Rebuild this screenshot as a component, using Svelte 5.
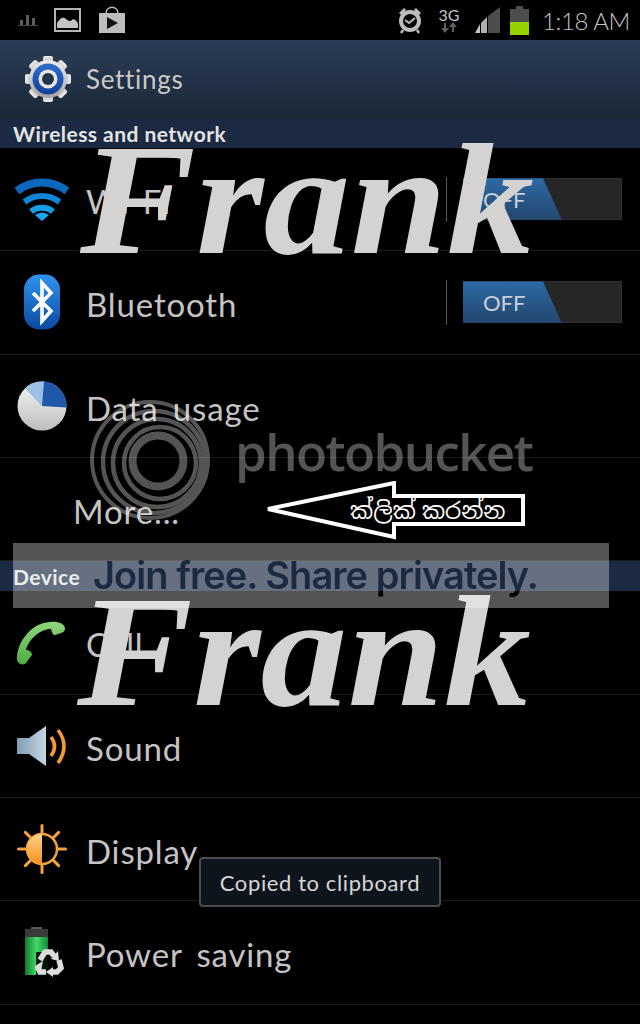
<script>
	const wireless = [
		{ id: 'wifi', label: 'Wi-Fi', toggle: true },
		{ id: 'bluetooth', label: 'Bluetooth', toggle: true },
		{ id: 'data', label: 'Data usage' },
		{ id: null, label: 'More...' }
	];
	const device = [
		{ id: 'call', label: 'Call' },
		{ id: 'sound', label: 'Sound' },
		{ id: 'display', label: 'Display' },
		{ id: 'power', label: 'Power saving' }
	];
	const teeth = [0, 45, 90, 135, 180, 225, 270, 315];
	const rays = [0, 45, 90, 135, 180, 225, 270, 315];
	const rings = [
		{ cx: 150, cy: 460, r: 58, w: 4 },
		{ cx: 154, cy: 462, r: 51, w: 4.5 },
		{ cx: 157, cy: 463, r: 44, w: 4.5 },
		{ cx: 160, cy: 463, r: 36, w: 4.5 },
		{ cx: 158, cy: 461, r: 25.5, w: 8 }
	];
</script>

{#snippet icon(id)}
	<svg class="icon" viewBox="0 0 56 56" width="56" height="56" aria-hidden="true">
		{#if id === 'wifi'}
			<g fill="none">
				<path d="M3 20A41 41 0 0 1 53 20" stroke-width="8" stroke="#0c68bd" />
				<path d="M10.5 31A29 29 0 0 1 45.5 31" stroke-width="6" stroke="#1184d6" />
				<path d="M17 40.5A18 18 0 0 1 39 40.5" stroke-width="6" stroke="#179ce6" />
			</g>
			<path d="M28 50L21 44Q28 39 35 44Z" fill="#1aa6ee" />
		{:else if id === 'bluetooth'}
			<defs>
				<linearGradient id="bt-g" x1="0" y1="0" x2="0" y2="1">
					<stop offset="0" stop-color="#2f93ee" />
					<stop offset="1" stop-color="#0a4aa0" />
				</linearGradient>
			</defs>
			<rect x="10" y="0.5" width="36" height="55" rx="15" fill="url(#bt-g)" />
			<path
				d="M19 19L37 37L28 47V9L37 19L19 37"
				fill="none"
				stroke="#fff"
				stroke-width="3.6"
				stroke-linejoin="miter"
			/>
		{:else if id === 'data'}
			<defs>
				<linearGradient id="pie-g" x1="0" y1="0" x2="0" y2="1">
					<stop offset="0" stop-color="#f6f6f6" />
					<stop offset="1" stop-color="#bdbdbd" />
				</linearGradient>
			</defs>
			<circle cx="28" cy="28" r="24.5" fill="url(#pie-g)" />
			<path d="M28 28L23 3.8A24.5 24.5 0 0 1 52.5 29.5Z" fill="#1f58a8" />
			<path d="M28 28L11 10.5A24.5 24.5 0 0 1 30 3.6Z" fill="#9cc0e6" />
		{:else if id === 'call'}
			<defs>
				<linearGradient id="call-g" x1="0" y1="0" x2="0" y2="1">
					<stop offset="0" stop-color="#8ed67a" />
					<stop offset="1" stop-color="#4fae45" />
				</linearGradient>
			</defs>
			<path
				d="M3 46C2 30 16 9 36 8C43 7 50 9 51 14C51 17 50 18 47 19L41 21C39 21 38 19 37 15C26 15 15 25 12 36C15 36 18 38 18 41L12 49C9 52 4 50 3 46Z"
				fill="url(#call-g)"
			/>
		{:else if id === 'sound'}
			<defs>
				<linearGradient id="spk-g" x1="0" y1="0" x2="1" y2="0">
					<stop offset="0" stop-color="#7f9db3" />
					<stop offset="1" stop-color="#c6d6e2" />
				</linearGradient>
			</defs>
			<path d="M3 20H15L32 8V48L15 36H3Z" fill="url(#spk-g)" />
			<path
				d="M37 19Q44 28 37 38M44 12Q56 28 44 45"
				fill="none"
				stroke="#f59a2e"
				stroke-width="3.6"
			/>
		{:else if id === 'display'}
			<defs>
				<linearGradient id="sun-g" x1="0" y1="0" x2="0" y2="1">
					<stop offset="0" stop-color="#ffd089" />
					<stop offset="1" stop-color="#f59120" />
				</linearGradient>
			</defs>
			{#each rays as a}
				<rect x="26.5" y="3" width="3" height="12" rx="1.5" fill="#f7a23b" transform="rotate({a} 28 28)" />
			{/each}
			<circle cx="28" cy="28" r="15" fill="#000" stroke="#f7a23b" stroke-width="2.5" />
			<path d="M28 13A15 15 0 0 0 28 43Z" fill="url(#sun-g)" />
		{:else if id === 'power'}
			<defs>
				<linearGradient id="bat-g" x1="0" y1="0" x2="1" y2="0">
					<stop offset="0" stop-color="#0f7a2e" />
					<stop offset="0.5" stop-color="#45d868" />
					<stop offset="1" stop-color="#128a38" />
				</linearGradient>
			</defs>
			<rect x="17" y="3" width="11" height="3" fill="#555" />
			<rect x="11" y="5" width="23" height="8" fill="#3a3a3a" />
			<rect x="11" y="13" width="23" height="38" fill="url(#bat-g)" />
			<path d="M22 28H50V53H22Z" fill="#000" opacity="0.85" />
			<g fill="none" stroke="#dcdcdc" stroke-width="5.5">
				<path d="M26 36L31 28H37L40 32" />
				<path d="M45 36L47 44L43 48H38" />
				<path d="M32 48H26L23 42" />
			</g>
			<path d="M37 35L44 27L45 37ZM39 43V53L32 48ZM21 42L29 37L27 47Z" fill="#dcdcdc" />
		{/if}
	</svg>
{/snippet}

{#snippet row(item)}
	<div class="row">
		{#if item.id}
			{@render icon(item.id)}
		{/if}
		<span class="label" class:indent={!item.id}>{item.label}</span>
		{#if item.toggle}
			<span class="divider"></span>
			<span class="toggle"><span class="toggle-on">OFF</span></span>
		{/if}
	</div>
{/snippet}

<main class="screen">
	<header class="status">
		<div class="status-left">
			<svg width="20" height="12" viewBox="0 0 20 12" aria-hidden="true">
				<path d="M0 11.5H20" stroke="#4a4a4a" />
				<path d="M2 6h3v5H2zM8 1h3v10H8zM14 4h3v7h-3z" fill="#5c5c5c" />
			</svg>
			<svg width="28" height="24" viewBox="0 0 28 24" aria-hidden="true">
				<rect x="1" y="1" width="25" height="22" fill="none" stroke="#b5b5b5" stroke-width="2" />
				<path d="M3 20V15Q8 7 12 11T19 11Q23 12 24 16V20Z" fill="#c4c4c4" />
			</svg>
			<svg width="28" height="28" viewBox="0 0 28 28" aria-hidden="true">
				<path d="M8 8C8 -1 20 -1 20 8" fill="none" stroke="#bdbdbd" stroke-width="1.5" />
				<path d="M1 7H27V27H1Z" fill="#bdbdbd" />
				<path d="M9 11L20 17L9 23Z" fill="#111" />
			</svg>
		</div>
		<div class="status-right">
			<svg width="24" height="28" viewBox="0 0 24 28" aria-hidden="true">
				<circle cx="12" cy="15" r="9" fill="none" stroke="#bdbdbd" stroke-width="4" />
				<path d="M7 14L11 17L17 12" fill="none" stroke="#bdbdbd" stroke-width="2" />
				<path d="M1 7L6 2L8 4L3 9ZM23 7L18 2L16 4L21 9Z" fill="#bdbdbd" />
				<path d="M5 24L3 27M19 24L21 27" stroke="#bdbdbd" stroke-width="2.5" />
			</svg>
			<div class="net">
				<span>3G</span>
				<svg width="16" height="11" viewBox="0 0 16 11" aria-hidden="true">
					<path d="M4 11L0 6H3V1H5V6H8ZM12 0L16 5H13V10H11V5H8Z" fill="#5f5f5f" />
				</svg>
			</div>
			<svg class="signal" width="27" height="28" viewBox="0 0 27 28" aria-hidden="true">
				<path d="M26 1V27H14V10Z" fill="#4d4d4d" />
				<path d="M13 11V27H7V17Z" fill="#b0b0b0" />
				<path d="M6 18V27H1Z" fill="#c4c4c4" />
			</svg>
			<svg class="battery" width="19" height="29" viewBox="0 0 19 29" aria-hidden="true">
				<rect x="6" y="0" width="7" height="3" fill="#4d4d4d" />
				<rect x="0" y="3" width="19" height="13" fill="#4d4d4d" />
				<rect x="0" y="16" width="19" height="13" fill="#95d300" />
			</svg>
			<span class="clock">1:18 AM</span>
		</div>
	</header>

	<div class="action-bar">
		<svg class="gear" viewBox="0 0 46 46" width="46" height="46" aria-hidden="true">
			<defs>
				<linearGradient id="gear-g" x1="0" y1="0" x2="0" y2="1">
					<stop offset="0" stop-color="#eeeeee" />
					<stop offset="1" stop-color="#a5a5a5" />
				</linearGradient>
				<linearGradient id="gear-b" x1="0" y1="0" x2="0" y2="1">
					<stop offset="0" stop-color="#2f6fd0" />
					<stop offset="1" stop-color="#123f96" />
				</linearGradient>
			</defs>
			{#each teeth as a}
				<rect x="18" y="0" width="10" height="10" rx="2" fill="url(#gear-g)" transform="rotate({a} 23 23)" />
			{/each}
			<circle cx="23" cy="23" r="19" fill="url(#gear-g)" />
			<circle cx="23" cy="23" r="15.5" fill="url(#gear-b)" />
			<circle cx="23" cy="23" r="9.5" fill="#e6e6e6" />
			<circle cx="23" cy="23" r="6" fill="#24344a" />
		</svg>
		<span class="title">Settings</span>
	</div>

	<div class="section">Wireless and network</div>
	{#each wireless as item}
		{@render row(item)}
	{/each}
	<div class="section">Device</div>
	{#each device as item}
		{@render row(item)}
	{/each}

	<!-- watermarks sit on top of the whole screenshot -->
	<div class="frank frank-top">Frank</div>
	<div class="frank frank-bottom">Frank</div>

	<svg class="rings" viewBox="85 395 130 130" width="130" height="130" aria-hidden="true">
		<g opacity="0.33">
			{#each rings as ring}
				<circle cx={ring.cx} cy={ring.cy} r={ring.r} fill="none" stroke="#fff" stroke-width={ring.w} />
			{/each}
		</g>
	</svg>
	<div class="bucket">photobucket</div>

	<svg class="arrow" viewBox="0 0 264 60" width="264" height="60" aria-hidden="true">
		<path d="M4 28L130 2V15H259V43H130V56Z" fill="#000" stroke="#fff" stroke-width="4" />
	</svg>
	<div class="arrow-text">ක්ලික් කරන්න</div>

	<div class="band"><span>Join free. Share privately.</span></div>

	<div class="toast">Copied to clipboard</div>
</main>

<style>
	:global(body) {
		background: #000;
	}

	.screen {
		position: relative;
		width: 640px;
		height: 1024px;
		overflow: hidden;
		background: #000;
		color: #c4c4c4;
		font-family: Lato, 'Noto Sans', sans-serif;
	}

	.status {
		display: flex;
		justify-content: space-between;
		align-items: center;
		height: 40px;
		padding: 0 10px 0 18px;
		box-sizing: border-box;
	}

	.status-left,
	.status-right {
		display: flex;
		align-items: center;
	}

	.status-left {
		gap: 16px;
	}

	.net {
		display: flex;
		flex-direction: column;
		align-items: center;
		width: 20px;
		margin-left: 17px;
		font-size: 16px;
		line-height: 15px;
		color: #c4c4c4;
	}

	.signal {
		margin-left: 15px;
	}

	.battery {
		margin-left: 9px;
	}

	.clock {
		margin-left: 13px;
		font-size: 24px;
		font-weight: 300;
		letter-spacing: -0.4px;
		white-space: nowrap;
	}

	.action-bar {
		display: flex;
		align-items: center;
		height: 78px;
		padding-left: 25px;
		box-sizing: border-box;
		background: linear-gradient(#2b3c56, #1b2838);
	}

	.gear {
		margin-right: 15px;
	}

	.title {
		font-size: 26px;
		letter-spacing: 0.7px;
		color: #c9c9c9;
	}

	.section {
		display: flex;
		align-items: center;
		height: 30px;
		padding-left: 13px;
		background: #1b2a42;
		color: #e4e4e4;
		font-size: 21px;
		font-weight: 700;
		letter-spacing: 0.45px;
	}

	.row {
		display: flex;
		align-items: center;
		height: 103.33px;
		box-sizing: border-box;
		border-bottom: 1px solid #1c1c1c;
		padding-left: 14px;
		padding-right: 18px;
	}

	.icon {
		flex: none;
		margin-right: 16px;
	}

	.label {
		margin-top: 4px;
		font-size: 33px;
		font-weight: 400;
		letter-spacing: 0.85px;
		word-spacing: 5px;
		color: #c4c4c4;
	}

	.label.indent {
		margin-left: 59px;
	}

	.divider {
		width: 1px;
		height: 45px;
		margin-left: auto;
		margin-right: 16px;
		background: #555;
	}

	.toggle {
		display: block;
		width: 159px;
		height: 42px;
		background: #262626;
		box-shadow: inset 0 0 0 1px #303030;
	}

	.toggle-on {
		display: flex;
		align-items: center;
		width: 99px;
		height: 100%;
		padding-left: 20px;
		box-sizing: border-box;
		clip-path: polygon(0 0, 80px 0, 100% 100%, 0 100%);
		background: linear-gradient(#2c6aa6, #23466e);
		color: #c8ced6;
		font-size: 22px;
	}

	.frank {
		position: absolute;
		font-family: 'Liberation Serif', serif;
		font-style: italic;
		font-weight: 700;
		font-size: 158px;
		line-height: 158px;
		color: #d4d3d2;
		transform: scaleX(1.1);
		transform-origin: left top;
	}

	.frank-top {
		left: 80px;
		top: 121px;
	}

	.frank-bottom {
		left: 77px;
		top: 573px;
	}

	.rings {
		position: absolute;
		left: 85px;
		top: 395px;
	}

	.bucket {
		position: absolute;
		left: 235px;
		top: 421px;
		font-family: 'Open Sans', sans-serif;
		font-weight: 600;
		font-size: 51px;
		line-height: 60px;
		letter-spacing: -1.6px;
		color: rgba(255, 255, 255, 0.33);
	}

	.arrow {
		position: absolute;
		left: 264px;
		top: 481px;
	}

	.arrow-text {
		position: absolute;
		left: 350px;
		top: 495px;
		font-family: 'Noto Sans', 'Noto Sans Sinhala', sans-serif;
		font-size: 23px;
		line-height: 30px;
		color: #fff;
	}

	.band {
		position: absolute;
		left: 13px;
		top: 543px;
		width: 596px;
		height: 65px;
		background: rgba(255, 255, 255, 0.33);
	}

	/* the wordmark is punched through the band, so it goes black below the header strip */
	.band span {
		position: absolute;
		left: 80px;
		top: 7px;
		font-family: Inter, sans-serif;
		font-weight: 600;
		font-size: 38px;
		line-height: 50px;
		letter-spacing: -0.95px;
		white-space: nowrap;
		background: linear-gradient(#1b2a42 0 41px, #000 41px);
		-webkit-background-clip: text;
		background-clip: text;
		color: transparent;
	}

	.toast {
		position: absolute;
		left: 199px;
		top: 857px;
		display: flex;
		align-items: center;
		justify-content: center;
		width: 242px;
		height: 50px;
		box-sizing: border-box;
		border: 2px solid #4a4d50;
		border-radius: 4px;
		background: #0e141b;
		color: #d6d6d6;
		font-size: 22px;
		letter-spacing: 0.6px;
	}
</style>
